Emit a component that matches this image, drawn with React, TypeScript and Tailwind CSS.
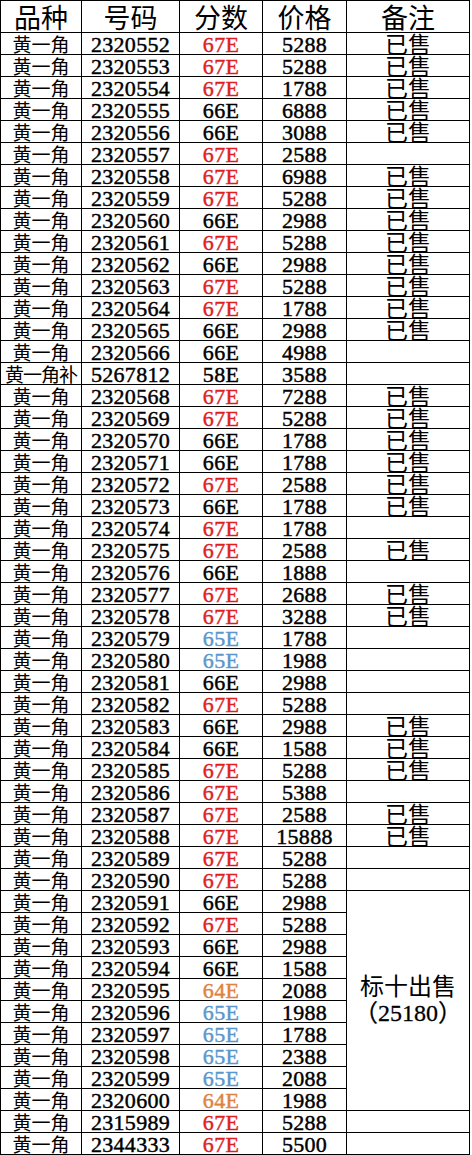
const rows: [string, string, string, string, boolean][] = [
  ["黄一角", "2320552", "67E", "5288", true],
  ["黄一角", "2320553", "67E", "5288", true],
  ["黄一角", "2320554", "67E", "1788", true],
  ["黄一角", "2320555", "66E", "6888", true],
  ["黄一角", "2320556", "66E", "3088", true],
  ["黄一角", "2320557", "67E", "2588", false],
  ["黄一角", "2320558", "67E", "6988", true],
  ["黄一角", "2320559", "67E", "5288", true],
  ["黄一角", "2320560", "66E", "2988", true],
  ["黄一角", "2320561", "67E", "5288", true],
  ["黄一角", "2320562", "66E", "2988", true],
  ["黄一角", "2320563", "67E", "5288", true],
  ["黄一角", "2320564", "67E", "1788", true],
  ["黄一角", "2320565", "66E", "2988", true],
  ["黄一角", "2320566", "66E", "4988", false],
  ["黄一角补", "5267812", "58E", "3588", false],
  ["黄一角", "2320568", "67E", "7288", true],
  ["黄一角", "2320569", "67E", "5288", true],
  ["黄一角", "2320570", "66E", "1788", true],
  ["黄一角", "2320571", "66E", "1788", true],
  ["黄一角", "2320572", "67E", "2588", true],
  ["黄一角", "2320573", "66E", "1788", true],
  ["黄一角", "2320574", "67E", "1788", false],
  ["黄一角", "2320575", "67E", "2588", true],
  ["黄一角", "2320576", "66E", "1888", false],
  ["黄一角", "2320577", "67E", "2688", true],
  ["黄一角", "2320578", "67E", "3288", true],
  ["黄一角", "2320579", "65E", "1788", false],
  ["黄一角", "2320580", "65E", "1988", false],
  ["黄一角", "2320581", "66E", "2988", false],
  ["黄一角", "2320582", "67E", "5288", false],
  ["黄一角", "2320583", "66E", "2988", true],
  ["黄一角", "2320584", "66E", "1588", true],
  ["黄一角", "2320585", "67E", "5288", true],
  ["黄一角", "2320586", "67E", "5388", false],
  ["黄一角", "2320587", "67E", "2588", true],
  ["黄一角", "2320588", "67E", "15888", true],
  ["黄一角", "2320589", "67E", "5288", false],
  ["黄一角", "2320590", "67E", "5288", false],
  ["黄一角", "2320591", "66E", "2988", false],
  ["黄一角", "2320592", "67E", "5288", false],
  ["黄一角", "2320593", "66E", "2988", false],
  ["黄一角", "2320594", "66E", "1588", false],
  ["黄一角", "2320595", "64E", "2088", false],
  ["黄一角", "2320596", "65E", "1988", false],
  ["黄一角", "2320597", "65E", "1788", false],
  ["黄一角", "2320598", "65E", "2388", false],
  ["黄一角", "2320599", "65E", "2088", false],
  ["黄一角", "2320600", "64E", "1988", false],
  ["黄一角", "2315989", "67E", "5288", false],
  ["黄一角", "2344333", "67E", "5500", false],
];

// rows 39..48 share one merged remark cell
const MERGE_START = 39;
const MERGE_END = 48;

function scoreColor(score: string) {
  if (score === "67E") return "text-[#de1f1f]";
  if (score === "65E") return "text-[#5b97cc]";
  if (score === "64E") return "text-[#e0823f]";
  return "text-black";
}

const cell = "flex items-center justify-center border-r border-b border-black overflow-hidden whitespace-nowrap";
const cjk = "font-['Noto_Sans_CJK_SC',sans-serif]";
const num =
  "font-['Liberation_Serif','Noto_Sans_CJK_SC',serif] text-[22px] leading-[18px] pt-[3px] tracking-[0.3px] [-webkit-text-stroke:0.45px_currentColor]";

export default function App() {
  return (
    <div className="w-[472px] h-[1155px] bg-white">
      <div className="grid w-[470px] grid-cols-[81px_98px_83px_84px_123px] grid-rows-[32px_repeat(51,22px)] border-l border-t border-black text-black">
        {["品种", "号码", "分数", "价格", "备注"].map((h) => (
          <div key={h} className={`${cell} ${cjk} text-[27px] leading-[30px]`}>
            {h}
          </div>
        ))}

        {rows.map(([kind, code, score, price, sold], i) => (
          <div key={code} className="contents">
            <div className={`${cell} ${cjk} text-[19px] leading-[21px] ${kind.length > 3 ? "tracking-[-1px]" : ""}`}>
              {kind}
            </div>
            <div className={`${cell} ${num}`}>{code}</div>
            <div className={`${cell} ${num} ${scoreColor(score)}`}>{score}</div>
            <div className={`${cell} ${num}`}>{price}</div>
            {i === MERGE_START ? (
              <div className={`${cell} row-span-10 flex-col ${cjk} text-[24px] leading-[28px] pb-[4px]`}>
                <span>标十出售</span>
                <span className="font-['Liberation_Serif','Noto_Sans_CJK_SC',serif] text-[24px] [-webkit-text-stroke:0.3px_currentColor]">
                  （25180）
                </span>
              </div>
            ) : i > MERGE_START && i <= MERGE_END ? null : (
              <div className={`${cell} ${cjk} text-[23px] leading-[21px]`}>{sold ? "已售" : ""}</div>
            )}
          </div>
        ))}
      </div>
    </div>
  );
}
